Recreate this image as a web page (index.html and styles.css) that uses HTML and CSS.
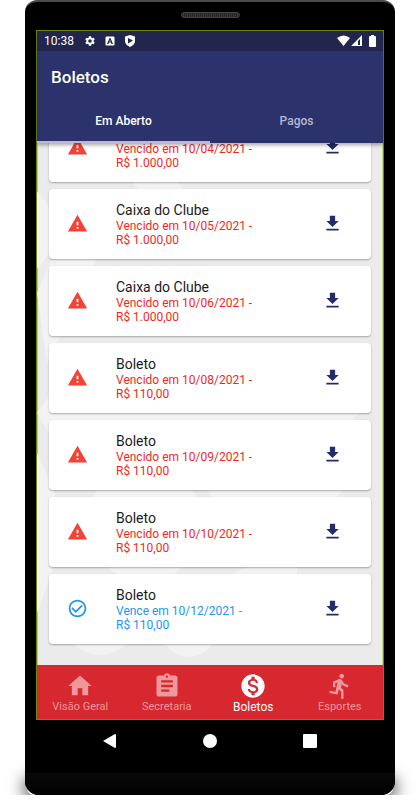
FILE: index.html
```html
<!DOCTYPE html>
<html lang="pt-BR">
<head>
<meta charset="utf-8">
<meta name="viewport" content="width=device-width, initial-scale=1">
<title>Boletos</title>
<link rel="stylesheet" href="styles.css">
</head>
<body>
<svg class="sprite" aria-hidden="true">
  <symbol id="warning" viewBox="0 0 24 24"><path d="M1 21h22L12 2 1 21zm12-3h-2v-2h2v2zm0-4h-2v-4h2v4z"/></symbol>
  <symbol id="download" viewBox="0 0 24 24"><path d="M19 9h-4V3H9v6H5l7 7 7-7zM5 18v2h14v-2H5z"/></symbol>
  <symbol id="check" viewBox="0 0 24 24"><path d="M16.59 7.58L10 14.17l-3.59-3.58L5 12l5 5 8-8zM12 2C6.48 2 2 6.48 2 12s4.48 10 10 10 10-4.48 10-10S17.52 2 12 2zm0 18c-4.42 0-8-3.58-8-8s3.58-8 8-8 8 3.58 8 8-3.58 8-8 8z"/></symbol>
</svg>
<div class="phone">
  <div class="speaker"></div>
  <div class="screen">
    <header class="app-bar">
      <div class="status">
        <span class="clock">10:38</span>
        <svg class="status-icon" viewBox="0 0 24 24"><path d="M19.14 12.94c.04-.3.06-.61.06-.94s-.02-.64-.07-.94l2.03-1.58a.49.49 0 0 0 .12-.61l-1.92-3.32a.49.49 0 0 0-.59-.22l-2.39.96a7 7 0 0 0-1.62-.94l-.36-2.54a.48.48 0 0 0-.48-.41h-3.84a.48.48 0 0 0-.47.41l-.36 2.54a7 7 0 0 0-1.62.94l-2.39-.96a.48.48 0 0 0-.59.22L2.74 8.87a.48.48 0 0 0 .12.61l2.03 1.58a6 6 0 0 0-.02 1.88l-2.03 1.58a.49.49 0 0 0-.12.61l1.92 3.32c.12.22.37.29.59.22l2.39-.96c.5.38 1.03.7 1.62.94l.36 2.54c.05.24.24.41.48.41h3.84c.24 0 .44-.17.47-.41l.36-2.54a7 7 0 0 0 1.62-.94l2.39.96c.22.08.47 0 .59-.22l1.92-3.32a.48.48 0 0 0-.12-.61zM12 15.6a3.6 3.6 0 1 1 0-7.2 3.6 3.6 0 0 1 0 7.2z"/></svg>
        <svg class="status-icon" viewBox="0 0 24 24"><path fill-rule="evenodd" d="M5 3h14a2 2 0 0 1 2 2v14a2 2 0 0 1-2 2H5a2 2 0 0 1-2-2V5a2 2 0 0 1 2-2zm6 3L6 18h3l1-3h4l1 3h3L13 6zm1 3l1 4h-2z"/></svg>
        <svg class="status-icon" viewBox="0 0 24 24"><path fill-rule="evenodd" d="M12 0L2 3v9c0 6 5 10 10 12 5-2 10-6 10-12V3zM8 6l10 5-10 6z"/></svg>
        <span class="spacer"></span>
        <svg class="signals" viewBox="0 0 40 12"><path d="M0 3q7-5 13 0l-6.500 8zM25 0v11H14z"/><path class="signal-gap" d="M23 4v6h-2V6z"/><path d="M33 1h1V0h3v1h1q1 0 1 1v9q0 1-1 1h-5q-1 0-1-1V2q0-1 1-1z"/></svg>
      </div>
      <h1>Boletos</h1>
      <nav class="tabs">
        <button class="tab active" type="button">Em Aberto</button>
        <button class="tab" type="button">Pagos</button>
      </nav>
    </header>
    <main class="content">
      <svg class="backdrop" viewBox="0 0 346 522" preserveAspectRatio="none" aria-hidden="true">
        <g fill="#f3f3f3"><circle cx="-35" cy="87" r="52"/><path d="M70 0h45l40 60h-45zM0 150l22-50 45 0L10 220zM0 270l20-28h300v26l-22 60H35L0 270zM162 320h80l12-27h50l15 35-50 70-90-30z"/><circle cx="305" cy="254" r="24"/><circle cx="63" cy="474" r="38"/><circle cx="152" cy="486" r="28"/><circle cx="108" cy="380" r="58"/><path d="M0 310l18 40-3 80-15 40zM110 420l60 22 90-40v40l-90 60z"/></g>
      </svg>
      <ul class="list">
        <li class="card scrolled"><svg class="state"><use href="#warning"/></svg><div class="info"><p>Vencido em 10/04/2021 - R$&nbsp;1.000,00</p></div><button class="get" type="button" aria-label="Baixar"><svg><use href="#download"/></svg></button></li>
        <li class="card"><svg class="state"><use href="#warning"/></svg><div class="info"><h2>Caixa do Clube</h2><p>Vencido em 10/05/2021 - R$&nbsp;1.000,00</p></div><button class="get" type="button" aria-label="Baixar"><svg><use href="#download"/></svg></button></li>
        <li class="card"><svg class="state"><use href="#warning"/></svg><div class="info"><h2>Caixa do Clube</h2><p>Vencido em 10/06/2021 - R$&nbsp;1.000,00</p></div><button class="get" type="button" aria-label="Baixar"><svg><use href="#download"/></svg></button></li>
        <li class="card"><svg class="state"><use href="#warning"/></svg><div class="info"><h2>Boleto</h2><p>Vencido em 10/08/2021 - R$&nbsp;110,00</p></div><button class="get" type="button" aria-label="Baixar"><svg><use href="#download"/></svg></button></li>
        <li class="card"><svg class="state"><use href="#warning"/></svg><div class="info"><h2>Boleto</h2><p>Vencido em 10/09/2021 - R$&nbsp;110,00</p></div><button class="get" type="button" aria-label="Baixar"><svg><use href="#download"/></svg></button></li>
        <li class="card"><svg class="state"><use href="#warning"/></svg><div class="info"><h2>Boleto</h2><p>Vencido em 10/10/2021 - R$&nbsp;110,00</p></div><button class="get" type="button" aria-label="Baixar"><svg><use href="#download"/></svg></button></li>
        <li class="card due"><svg class="state"><use href="#check"/></svg><div class="info"><h2>Boleto</h2><p>Vence em 10/12/2021 - R$&nbsp;110,00</p></div><button class="get" type="button" aria-label="Baixar"><svg><use href="#download"/></svg></button></li>
      </ul>
    </main>
    <nav class="bottom-bar">
      <a href="#geral"><svg viewBox="0 0 24 24"><path d="M10 20v-6h4v6h5v-8h3L12 3 2 12h3v8z"/></svg><span>Visão Geral</span></a>
      <a href="#secretaria"><svg viewBox="0 0 24 24"><path d="M19 3h-4.180C14.400 1.840 13.300 1 12 1s-2.400.84-2.820 2H5c-1.100 0-2 .9-2 2v14c0 1.100.9 2 2 2h14c1.100 0 2-.9 2-2V5c0-1.100-.9-2-2-2zm-7 0c.55 0 1 .45 1 1s-.45 1-1 1-1-.45-1-1 .45-1 1-1zm2 14H7v-2h7v2zm3-4H7v-2h10v2zm0-4H7V7h10v2z"/></svg><span>Secretaria</span></a>
      <a class="active" href="#boletos" aria-current="page"><svg viewBox="0 0 24 24"><path d="M12 2C6.480 2 2 6.480 2 12s4.480 10 10 10 10-4.480 10-10S17.520 2 12 2zm1.410 16.090V20h-2.670v-1.930c-1.710-.36-3.160-1.460-3.270-3.400h1.960c.1 1.050.82 1.870 2.650 1.870 1.960 0 2.400-.98 2.400-1.590 0-.83-.44-1.610-2.670-2.140-2.480-.6-4.180-1.620-4.180-3.670 0-1.720 1.390-2.840 3.110-3.210V4h2.670v1.950c1.860.45 2.790 1.860 2.850 3.390H14.300c-.05-1.110-.64-1.870-2.220-1.870-1.500 0-2.400.68-2.400 1.640 0 .84.65 1.390 2.670 1.910s4.180 1.390 4.180 3.910c-.01 1.830-1.380 2.830-3.120 3.160z"/></svg><span>Boletos</span></a>
      <a href="#esportes"><svg viewBox="0 0 24 24"><path d="M13.490 5.480c1.100 0 2-.9 2-2s-.9-2-2-2-2 .9-2 2 .9 2 2 2zm-3.600 13.900l1-4.400 2.100 2v6h2v-7.500l-2.100-2 .6-3c1.300 1.500 3.300 2.500 5.500 2.500v-2c-1.900 0-3.500-1-4.300-2.400l-1-1.600c-.4-.6-1-1-1.700-1-.3 0-.5.1-.8.1l-5.200 2.200v4.700h2v-3.400l1.800-.7-1.600 8.100-4.900-1-.4 2 7 1.400z"/></svg><span>Esportes</span></a>
    </nav>
  </div>
  <div class="system-keys">
    <button type="button" aria-label="Voltar"><svg viewBox="0 0 16 16"><path d="M1 8L13 1q1 0 1 1v12q0 1-1 1z"/></svg></button>
    <button type="button" aria-label="Início"><svg viewBox="0 0 16 16"><circle cx="8" cy="8" r="7"/></svg></button>
    <button type="button" aria-label="Recentes"><svg viewBox="0 0 16 16"><rect x="1" y="1" width="14" height="14" rx="1"/></svg></button>
  </div>
  <div class="chin"></div>
</div>
</body>
</html>
```

FILE: styles.css
```css
* { box-sizing: border-box; }

body {
  margin: 0;
  background: #fff;
  font-family: Roboto, "Liberation Sans", sans-serif;
}

h1, h2, p, ul { margin: 0; padding: 0; font-weight: 400; }
button { padding: 0; border: 0; background: none; color: inherit; font: inherit; }
svg { display: block; fill: currentColor; }
.sprite { position: absolute; width: 0; height: 0; }

.phone {
  position: relative;
  display: flex;
  flex-direction: column;
  height: calc(100vh - 5px);
  margin: 0 25px;
  padding: 12px 11px 0;
  border-top: 2px solid #4a4a4a;
  border-radius: 12px 12px 14px 14px;
  background: #000;
}

/* Soft shadow that the device casts around its foot */
.phone::before {
  content: "";
  position: absolute;
  z-index: -1;
  inset: auto 2px 0;
  height: 14px;
  border-radius: 8px;
  box-shadow: 0 0 18px 2px #000;
  clip-path: inset(-30px -30px -2px);
}

.speaker {
  flex: none;
  align-self: center;
  width: 59px;
  height: 6px;
  margin: -2px 0 12px;
  border: 1px solid #444;
  border-radius: 3px;
  background: repeating-linear-gradient(90deg, #222 0 1px, #3a3a3a 1px 2px);
}

.screen {
  flex: 1;
  display: flex;
  flex-direction: column;
  min-height: 0;
  border: 1px solid #6d8a10;
  background: #ebebeb;
}

.app-bar {
  position: relative;
  z-index: 1;
  background: #2c326b;
  color: #fff;
  box-shadow: 0 2px 4px rgba(0, 0, 0, .35);
}

.status {
  display: flex;
  align-items: center;
  height: 20px;
  padding: 0 6px 0 7px;
  background: #22264f;
}

.clock { margin-right: 10px; font-size: 12px; }
.status-icon { width: 12px; height: 12px; margin-right: 8px; }
.spacer { flex: 1; }
.signals { width: 40px; height: 12px; }
.signal-gap { fill: #22264f; }

h1 {
  padding: 14px 14px 0;
  font-size: 17px;
  font-weight: 500;
  line-height: 24px;
}

.tabs { display: grid; grid-template-columns: 1fr 1fr; margin-top: 11px; }

.tab {
  height: 43px;
  border-bottom: 2px solid transparent;
  color: #b6b8ce;
  font-size: 12px;
  font-weight: 500;
}

.tab.active { border-bottom-color: #b9bad4; color: #fff; }

.content {
  position: relative;
  flex: 1;
  display: flex;
  flex-direction: column;
  justify-content: flex-end;
  min-height: 0;
  overflow: hidden;
  box-shadow: inset 1px 0 #a9d04e, inset -1px 0 #c3e07c;
}

.backdrop { position: absolute; inset: 0; width: 100%; height: 100%; }

.list {
  position: relative;
  display: flex;
  flex-direction: column;
  gap: 7px;
  padding: 0 12px 21px;
  list-style: none;
}

.card {
  display: flex;
  align-items: center;
  height: 70px;
  padding: 0 28px 0 18px;
  border-radius: 4px;
  background: #fff;
  box-shadow: 0 1px 2px rgba(0, 0, 0, .3);
  color: #f44336;
}

.state { flex: none; width: 21px; height: 21px; margin-bottom: 2px; }
.info { flex: 1; max-width: 178px; margin: 0 auto 0 28px; }
.info h2 { color: #1c1c1c; font-size: 14px; line-height: 17px; }
.info p { max-width: 150px; color: #f0281e; font-size: 12px; line-height: 14px; }
.scrolled .info { padding-top: 17px; }
.get { margin-bottom: 2px; color: #262b69; }
.get svg { width: 21px; height: 21px; }
.due { color: #2196f3; }
.due p { color: #2196f3; }

.bottom-bar {
  display: grid;
  grid-template-columns: repeat(4, 1fr);
  height: 54px;
  background: #d7282f;
}

.bottom-bar a {
  display: flex;
  flex-direction: column;
  align-items: center;
  padding-top: 7px;
  color: #ee989c;
  font-size: 11px;
  line-height: 14px;
  text-decoration: none;
}

.bottom-bar svg { width: 28px; height: 28px; }
.bottom-bar .active { color: #fff; font-size: 12px; }

.system-keys {
  display: flex;
  justify-content: center;
  gap: 84px;
  padding: 13px 0 24px;
  color: #fff;
}

.system-keys svg { width: 16px; height: 16px; }

.chin {
  height: 22px;
  margin: 0 -11px;
  border-radius: 0 0 14px 14px;
  background: linear-gradient(#090909, #000);
}
```
